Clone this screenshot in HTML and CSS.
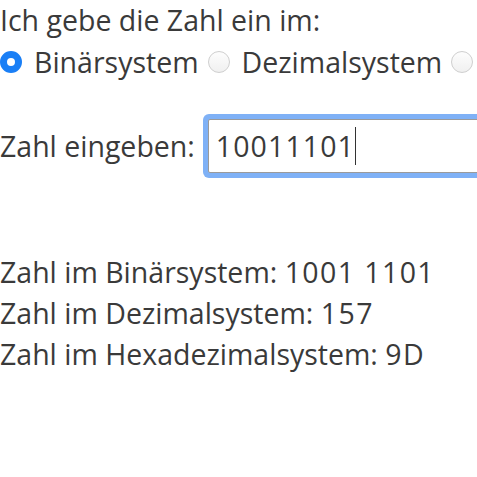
FILE: index.html
```html
<!DOCTYPE html>
<html lang="de">
<head>
<meta charset="utf-8">
<link rel="stylesheet" href="styles.css">
</head>
<body>
<div class="page">
  <div class="choice">
    <div class="line">Ich gebe die Zahl ein im:</div>
    <div class="radios">
      <label class="opt"><input type="radio" name="sys" class="radio" checked> Binärsystem</label>
      <label class="opt"><input type="radio" name="sys" class="radio"> Dezimalsystem</label>
      <label class="opt"><input type="radio" name="sys" class="radio"> Hexadezimalsystem</label>
    </div>
  </div>
  <div class="entry">
    <span class="label">Zahl eingeben:</span>
    <span class="field">
      <input type="text" class="number" value="10011101">
      <span class="caret"></span>
    </span>
  </div>
  <div class="results">
    <div class="line">Zahl im Binärsystem: <span class="num">1001 1101</span></div>
    <div class="line">Zahl im Dezimalsystem: <span class="num">157</span></div>
    <div class="line">Zahl im Hexadezimalsystem: <span class="num">9D</span></div>
  </div>
</div>
</body>
</html>
```
FILE: styles.css
```css
html, body {
  margin: 0;
  padding: 0;
  background: #ffffff;
  overflow: hidden;
}
.page {
  font-family: "Open Sans", "Liberation Sans", sans-serif;
  font-size: 28.5px;
  color: #3a3a3a;
  width: 477px;
  overflow: hidden;
}
.line {
  height: 41px;
  line-height: 41px;
  white-space: nowrap;
}
.num {
  letter-spacing: 1.4px;
}
.radios {
  display: flex;
  align-items: center;
  height: 42px;
  white-space: nowrap;
  overflow: hidden;
}
.opt {
  display: flex;
  align-items: center;
  gap: 12px;
  margin-right: 9px;
  flex-shrink: 0;
}
.radio {
  appearance: none;
  -webkit-appearance: none;
  margin: 0;
  width: 22px;
  height: 22px;
  border-radius: 50%;
  border: 1px solid #cfcfcf;
  background: linear-gradient(#fdfdfd, #f0f0f0);
  box-sizing: border-box;
  flex-shrink: 0;
}
.radio:checked {
  border: 7px solid #1a7ff6;
  background: #ffffff;
}
.entry {
  display: flex;
  align-items: center;
  margin-top: 31px;
  height: 64px;
  white-space: nowrap;
}
.label {
  margin-right: 8px;
}
.field {
  position: relative;
  display: block;
  flex-shrink: 0;
}
.number {
  display: block;
  box-sizing: border-box;
  width: 320px;
  height: 54px;
  margin: 5px;
  padding: 0 7px;
  border: 1px solid #9a9a9a;
  border-radius: 2px;
  outline: none;
  box-shadow: 0 0 0 5px #7fb1f6;
  font-family: inherit;
  font-size: 28.5px;
  letter-spacing: 1.1px;
  color: #3a3a3a;
  background: #ffffff;
}
.caret {
  position: absolute;
  left: 152px;
  top: 13px;
  width: 1.5px;
  height: 38px;
  background: #333333;
}
.results {
  margin-top: 74px;
}
```
